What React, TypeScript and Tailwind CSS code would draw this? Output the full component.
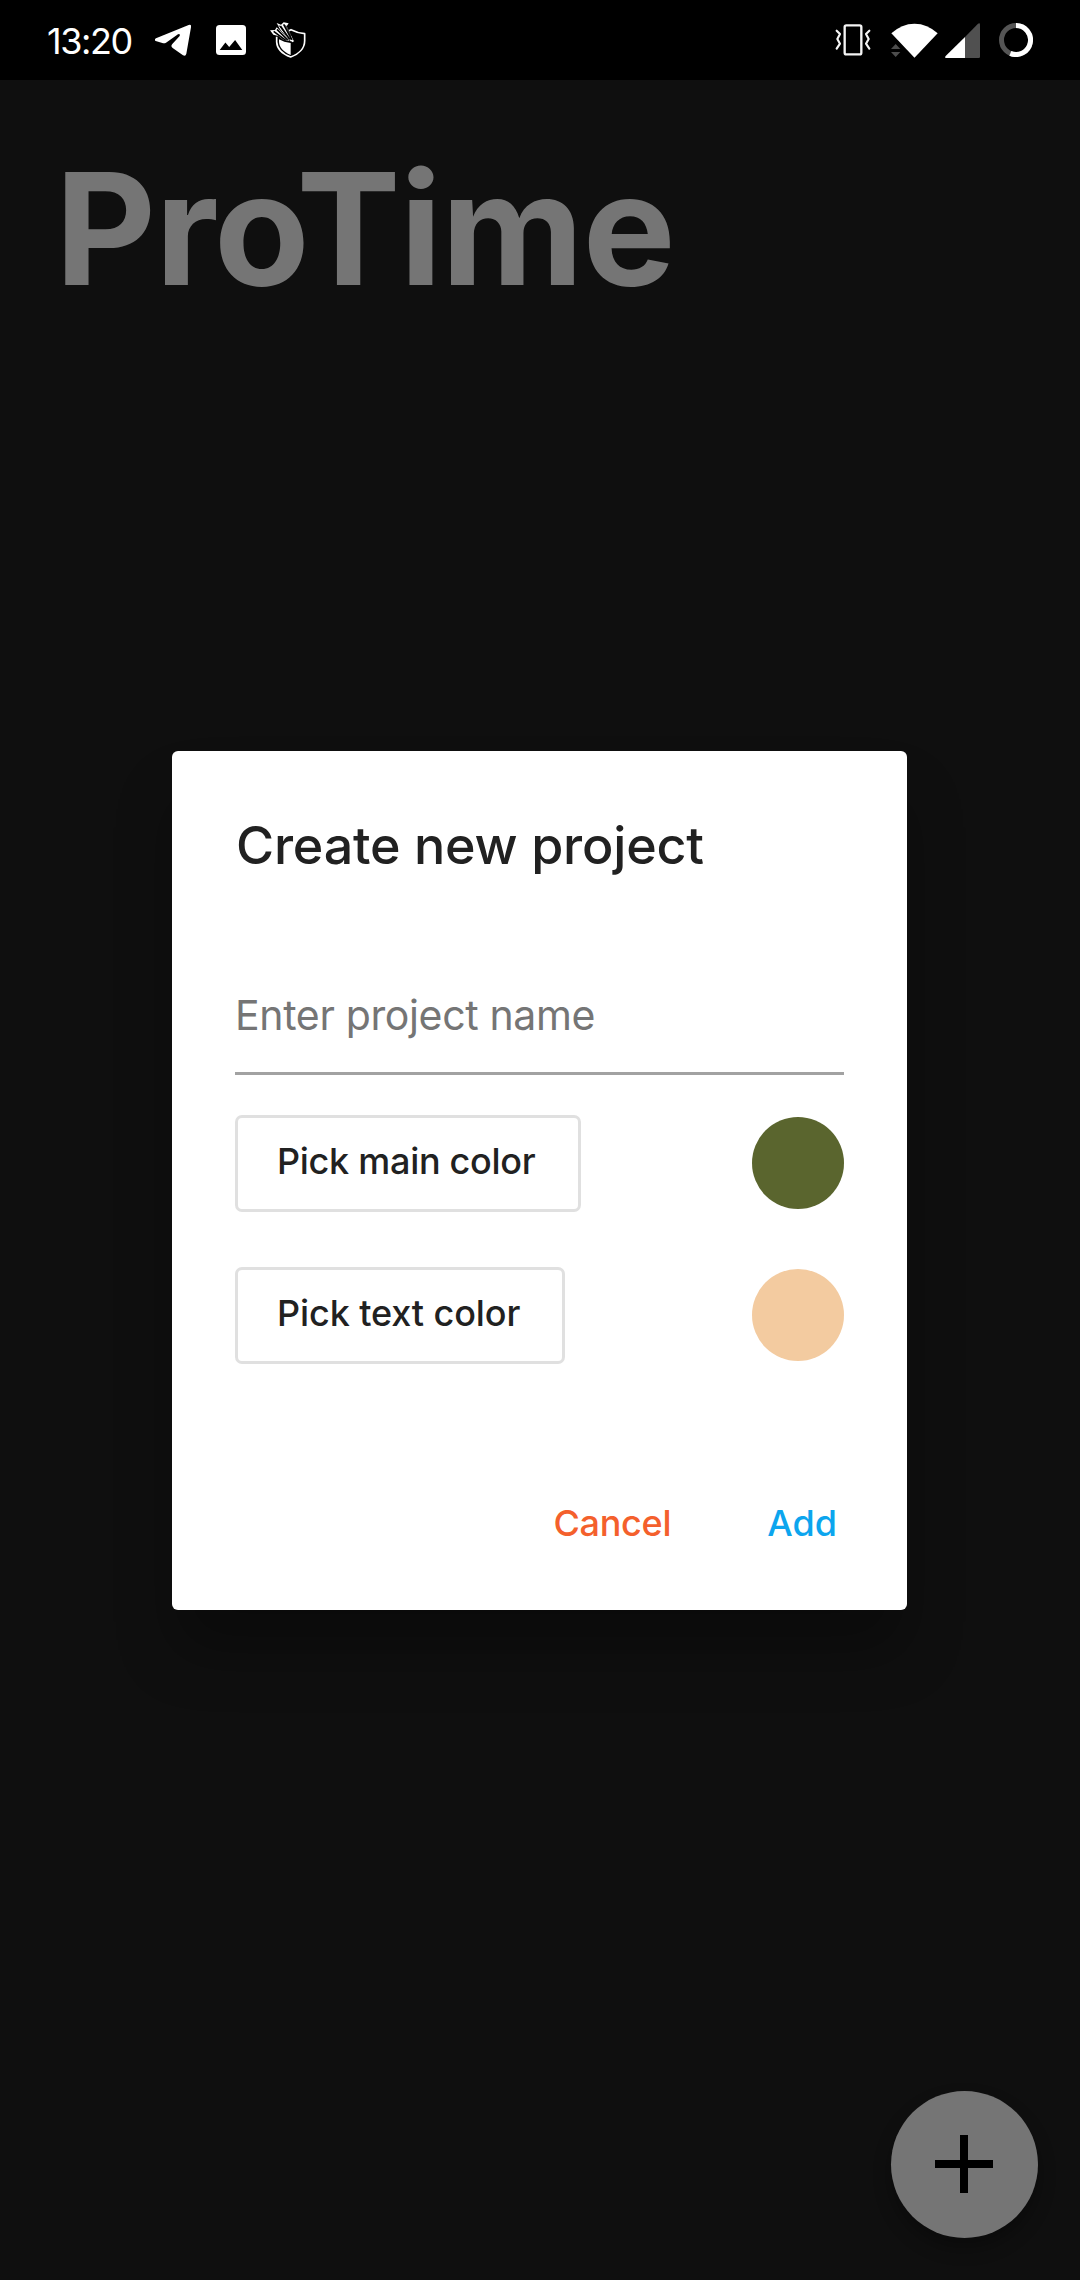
import React from "react";

function TelegramIcon() {
  return (
    <svg className="h-[33px] w-9" viewBox="375 75 108 99" fill="white">
      <path d="M377 126Q371 122 378 118L476 78Q485 75 483 85L469 164Q467 173 459 169L428 147Q421 142 427 135L449 111Q451 103 444 106L408 131Q403 134 397 132Z" />
    </svg>
  );
}

function PictureIcon() {
  return (
    <svg className="h-[30px] w-[30px]" viewBox="0 0 30 30">
      <rect width="30" height="30" rx="3.5" fill="white" />
      <path d="M3.7 25L9.4 17.4L13.2 22L19.1 15L26.3 25Z" fill="black" />
    </svg>
  );
}

function ShieldIcon() {
  return (
    <svg className="h-9 w-9" viewBox="29 32 108 108" fill="none">
      <path
        d="M49 76V92C50 112 66 128 91 137C116 128 133 110 133 88V67C118 66 106 62 92 55L86 58"
        stroke="white"
        strokeWidth="5"
        strokeLinejoin="round"
      />
      <path d="M56 84L72 91L91 95V131C68 121 57 108 56 92Z" fill="white" />
      <path d="M29 57L44 56L49 48L62 60L88 88L70 86L54 74L39 70Z" fill="white" />
      <path d="M49 35L62 40L70 33L85 36L79 45L100 88L90 90L60 55Z" fill="white" />
      <path d="M40 60L76 87M50 54L82 86M60 44L90 87M70 39L95 86" stroke="black" strokeWidth="5" />
      <path d="M56 42L78 72M76 42L92 74" stroke="black" strokeWidth="2.5" />
      <path d="M86 83L102 89L96 93Z" fill="white" />
    </svg>
  );
}

function VibrateIcon() {
  return (
    <svg className="h-8 w-9" viewBox="17 29 108 96" fill="none" stroke="#f5f5f5" strokeLinecap="round" strokeLinejoin="round">
      <rect x="46" y="33" width="50" height="87" rx="5" strokeWidth="7" />
      <path d="M22 49L32 59L24 74L32 88L22 103M120 49L110 59L118 74L110 88L120 103" strokeWidth="6.5" />
    </svg>
  );
}

function WifiIcon() {
  return (
    <svg className="h-[35px] w-[47px]" viewBox="273 69 141 105">
      <path d="M343.500 173L274 100Q305 71 343.500 71Q382 71 413 100Z" fill="white" />
      <path d="M273 147H301L287 132ZM273 156H301L287 171Z" fill="#4d4d4d" />
    </svg>
  );
}

function SignalIcon() {
  return (
    <svg className="h-[35px] w-[35px]" viewBox="435 69 105 105">
      <path d="M495 111L534 71Q540 67 540 74V170Q540 174 536 174H495Z" fill="#505050" />
      <path d="M495 111V174H438Q433 173 437 168Z" fill="white" />
    </svg>
  );
}

function BatteryIcon() {
  return (
    <svg className="h-[34px] w-[34px]" viewBox="0 0 102 102" fill="none" strokeWidth="15">
      <circle cx="51" cy="51" r="43.500" stroke="#555555" />
      <path d="M51 7.500A43.500 43.500 0 1 1 34 91" stroke="white" />
    </svg>
  );
}

function StatusBar() {
  return (
    <header className="flex h-20 items-center justify-between bg-black pr-[47px] pl-[47px]">
      <div className="flex items-center">
        <span className="w-[108px] pt-0.5 text-[36px] leading-10 tracking-[-1.4px] text-white">13:20</span>
        <TelegramIcon />
        <div className="ml-[25px]">
          <PictureIcon />
        </div>
        <div className="ml-6">
          <ShieldIcon />
        </div>
      </div>
      <div className="flex items-center">
        <VibrateIcon />
        <div className="ml-5">
          <WifiIcon />
        </div>
        <div className="ml-[7px]">
          <SignalIcon />
        </div>
        <div className="ml-[19px]">
          <BatteryIcon />
        </div>
      </div>
    </header>
  );
}

function ColorRow({ label, track, swatch }: { label: string; track: string; swatch: string }) {
  return (
    <div className="flex items-center justify-between">
      <button
        className={`h-[97px] rounded-[7px] border-[3px] border-[#e0e0e0] pb-[5px] text-left text-[36px] leading-[44px] font-medium text-[#212121] ${track}`}
      >
        {label}
      </button>
      <span className={`h-[92px] w-[92px] rounded-full ${swatch}`} />
    </div>
  );
}

function CreateProjectDialog() {
  return (
    <section className="mr-px flex h-[859px] w-[735px] flex-col rounded-md bg-white pt-[65px] pr-[63px] pl-[63px] shadow-[0_44px_60px_-4px_rgba(0,0,0,0.3)]">
      <h2 className="pl-px text-[52px] leading-[60px] font-medium tracking-[-0.2px] whitespace-nowrap text-[#212121]">
        Create new project
      </h2>
      <input
        className="mt-[106px] h-[93px] w-full border-b-[3px] border-[#a2a2a2] pb-[23px] text-[41px] leading-[50px] tracking-[-0.35px] outline-none placeholder:text-[#757575]"
        placeholder="Enter project name"
      />
      <div className="mt-10 flex flex-col gap-[55px]">
        <ColorRow label="Pick main color" track="w-[346px] pl-[39px] tracking-[-0.28px]" swatch="bg-[#5a652e]" />
        <ColorRow label="Pick text color" track="w-[330px] pl-[39px] tracking-[-0.1px]" swatch="bg-[#f3cba0]" />
      </div>
      <div className="mt-[137px] flex justify-end gap-24 pr-[7px] text-[36px] leading-[44px] font-medium">
        <button className="tracking-[-0.28px] text-[#f4602c]">Cancel</button>
        <button className="text-[#0ca5ee]">Add</button>
      </div>
    </section>
  );
}

export default function App() {
  return (
    <div className="relative flex h-[2280px] w-[1080px] flex-col overflow-hidden bg-[#0f0f0f] font-['Inter',sans-serif]">
      <StatusBar />
      <main className="flex flex-1 flex-col items-start justify-between pt-[71px] pb-[42px]">
        <h1 className="pl-[55px] text-[156px] leading-[156px] font-bold tracking-[-0.9px] text-[#757575]">ProTime</h1>
        <button className="mr-[42px] flex h-[147px] w-[147px] items-center justify-center self-end rounded-full bg-[#757575] shadow-[0_10px_18px_rgba(0,0,0,0.3)]">
          <svg className="mr-px mb-px h-[58px] w-[58px]" viewBox="0 0 58 58">
            <path d="M25 0H33V25H58V33H33V58H25V33H0V25H25Z" fill="black" />
          </svg>
        </button>
      </main>
      <div className="absolute inset-x-0 top-20 bottom-0 flex items-center justify-center">
        <CreateProjectDialog />
      </div>
    </div>
  );
}
